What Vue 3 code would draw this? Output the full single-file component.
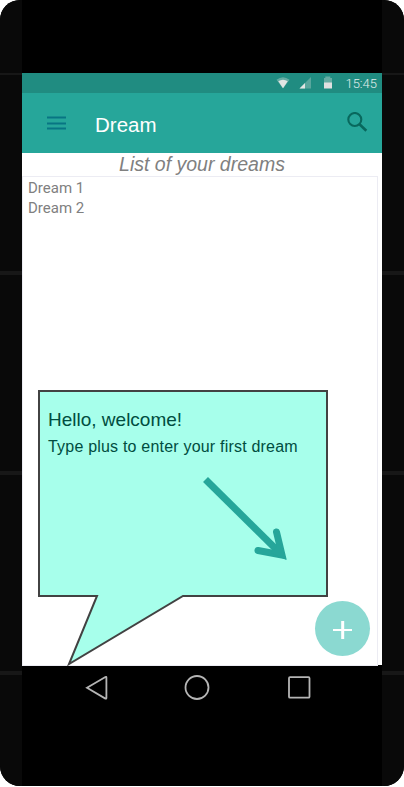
<script setup>
import { ref } from 'vue'

const title = ref('Dream')
const time = ref('15:45')
const dreams = ref(['Dream 1', 'Dream 2'])
</script>

<template>
  <div class="phone">
    <div class="side"></div>
    <div class="body">
      <div class="speaker"></div>
      <div class="statusbar">
        <svg class="signals" width="60" height="20" viewBox="0 0 60 20">
          <path d="M.5 6.7Q7 1.6 13.5 6.7L7 15.6Z" fill="#65aca3" />
          <path d="M2.3 8.3Q7 5 11.7 8.3L7 15.2Z" fill="#e0e5e3" />
          <path d="M35 4V15.5H23.5Z" fill="#59a69d" />
          <path d="M29 10V15.5H23.5Z" fill="#e0e5e3" />
          <path d="M48 5H49.3V3.4H54.3V5H56V10H48Z" fill="#65aca3" />
          <path d="M48 9.5H56V15.5H48Z" fill="#e0e0e0" />
        </svg>
        <span class="time">{{ time }}</span>
      </div>
      <header class="appbar">
        <svg class="menu" width="20" height="14" viewBox="0 0 20 14">
          <path d="M0 2H19M0 8H19M0 13H19" transform="translate(0 -.5)" stroke="#087583" stroke-width="2" />
        </svg>
        <h1 class="title">{{ title }}</h1>
        <svg class="search" width="21" height="21" viewBox="0 0 21 21" fill="none" stroke="#08685d">
          <circle cx="7.8" cy="7.5" r="6.5" stroke-width="2.1" />
          <path d="M12.5 12.2L19.3 18.8" stroke-width="2.6" />
        </svg>
      </header>
      <main class="content">
        <h2 class="heading">List of your dreams</h2>
        <ul class="list">
          <li v-for="dream in dreams" :key="dream">{{ dream }}</li>
        </ul>
        <div class="callout">
          <svg class="bubble" width="292" height="277" viewBox="0 0 292 277">
            <path d="M2 2H290V207H146L32 275L60 207H2Z" fill="#a7ffeb" stroke="#424242" stroke-width="2" />
            <g fill="none" stroke="#26a69a" stroke-width="7">
              <path d="M168.5 90.5L245 166" />
              <path d="M221 161.5L245 166L239.5 143" stroke-linecap="round" />
            </g>
            <path d="M234 164L243 154L249.5 171Z" fill="#26a69a" />
          </svg>
          <p class="hello">Hello, welcome!</p>
          <p class="hint">Type plus to enter your first dream</p>
        </div>
        <button class="fab" aria-label="Add">
          <svg width="20" height="18" viewBox="0 0 20 18">
            <path d="M0 9H19" stroke="#fff" stroke-width="2" />
            <path d="M9.7 0V18" stroke="#fff" stroke-width="3" />
          </svg>
        </button>
      </main>
      <nav class="navbar">
        <svg width="24" height="28" viewBox="0 0 24 28">
          <path d="M2 13.7L20.4 3Q21.4 2.5 21.4 3.5V24Q21.4 25 20.4 24.6Z" />
        </svg>
        <svg width="26" height="28" viewBox="0 0 26 28">
          <circle cx="13" cy="13.5" r="11.5" />
        </svg>
        <svg width="24" height="28" viewBox="0 0 24 28">
          <rect x="2" y="3.2" width="20.5" height="20.5" rx="1" />
        </svg>
      </nav>
    </div>
    <div class="side"></div>
  </div>
</template>

<style>
body {
  background: #fff;
}
</style>

<style scoped>
.phone {
  display: flex;
  width: 404px;
  height: 786px;
  border-radius: 20px;
  overflow: hidden;
  background: #000;
  font-family: "Liberation Sans", Arial, sans-serif;
}
.side {
  width: 22px;
  background:
    linear-gradient(#171717, #171717) 0 73px / 22px 2px no-repeat,
    linear-gradient(#171717, #171717) 0 271px / 22px 4px no-repeat,
    linear-gradient(#171717, #171717) 0 471px / 22px 4px no-repeat,
    linear-gradient(#171717, #171717) 0 671px / 22px 4px no-repeat,
    #090909;
}
.body {
  width: 360px;
  display: flex;
  flex-direction: column;
}
.speaker {
  height: 73px;
}
.statusbar {
  height: 20px;
  background: #208c81;
  display: flex;
  align-items: center;
  justify-content: flex-end;
  padding-right: 5px;
}
.signals {
  margin-right: 9px;
}
.time {
  font: 300 13px/20px Roboto, sans-serif;
  color: #e2eeec;
  padding-top: 2px;
}
.appbar {
  height: 60px;
  background: #26a69a;
  display: flex;
  align-items: flex-start;
}
.menu {
  margin: 23px 0 0 25px;
}
.title {
  margin: 20px 0 0 28px;
  font-size: 20.5px;
  line-height: 24px;
  font-weight: 400;
  color: #fff;
}
.search {
  margin: 19px 14px 0 auto;
}
.content {
  position: relative;
  height: 512px;
  background: #fff;
}
.heading {
  margin: 0;
  height: 23px;
  font-size: 19.5px;
  line-height: 23px;
  font-weight: 400;
  font-style: italic;
  color: #808080;
  text-align: center;
}
.list {
  box-sizing: border-box;
  width: 356px;
  height: 490px;
  margin: 0;
  padding: 1px 5px;
  border: 1px solid #ececf3;
  background: #fff;
  list-style: none;
  font: 15px/20px Roboto, sans-serif;
  color: #808080;
}
.callout {
  position: absolute;
  left: 15px;
  top: 236px;
  width: 292px;
  height: 277px;
  color: #004d40;
}
.bubble {
  position: absolute;
  left: 0;
  top: 0;
}
.hello,
.hint {
  position: relative;
  margin: 0;
  padding-left: 11px;
  white-space: nowrap;
}
.hello {
  padding-top: 19px;
  font-size: 19px;
  line-height: 24px;
}
.hint {
  padding-top: 5px;
  font-size: 16px;
  line-height: 20px;
  letter-spacing: 0.2px;
}
.fab {
  position: absolute;
  left: 293px;
  top: 448px;
  width: 55px;
  height: 55px;
  padding: 3px 0 0;
  border: 0;
  border-radius: 50%;
  background: #8bd9d1;
  display: flex;
  align-items: center;
  justify-content: center;
}
.navbar {
  display: grid;
  grid-template-columns: 24px 26px 24px;
  column-gap: 75px;
  padding: 9px 0 0 63px;
}
.navbar svg:nth-child(2) {
  justify-self: start;
}
.navbar svg:nth-child(3) {
  margin-left: 2px;
}
.navbar svg {
  fill: none;
  stroke: #b5b5b5;
  stroke-width: 1.8;
}
</style>
